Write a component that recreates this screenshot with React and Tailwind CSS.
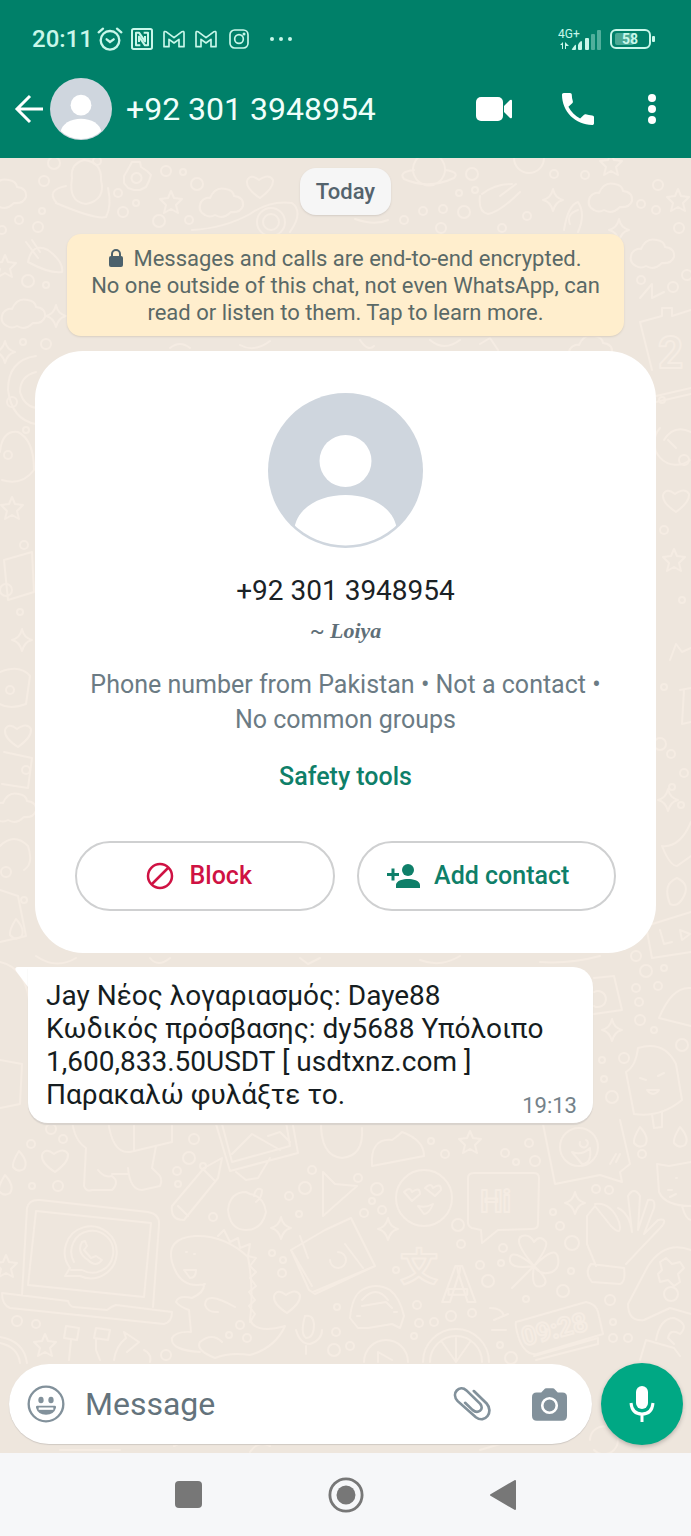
const STAR = 'M0-11 3-4 11-3 5 3 7 11 0 7-7 11-5 3-11-3-3-4Z'
const SPARKLE = 'M0-11Q2-2 10 0Q2 2 0 11Q-2 2-10 0Q-2-2 0-11Z'
const HEART = 'M0 12Q-14 3-13-5Q-10-13-1-6Q9-13 13-6Q14 2 0 12Z'
const CLOUD = 'M-16 12Q-24 8-20-1Q-16-6-11-5Q-6-17 5-14Q12-13 13-7Q23-6 22 3Q19 10 10 9Q2 17-6 12Q-11 15-16 12Z'
const DROP = 'M0-9Q10 2 5 9Q-1 13-6 7Q-7 2 0-9Z'

const SHAPES = [
  [STAR, 171, 202], [STAR, 5, 266], [STAR, 678, 200], [STAR, 611, 164], [STAR, 45, 1345], [STAR, 6, 1266],
  [STAR, 470, 1142], [STAR, 12, 508], [STAR, 674, 560],
  [SPARKLE, 553, 200], [SPARKLE, 619, 230], [SPARKLE, 56, 316], [SPARKLE, 281, 1228], [SPARKLE, 388, 1229],
  [SPARKLE, 575, 1203], [SPARKLE, 612, 1030], [SPARKLE, 5, 352], [SPARKLE, 22, 640], [SPARKLE, 668, 800],
  [HEART, 260, 186], [HEART, 55, 1160], [HEART, 287, 1301], [HEART, 18, 735], [HEART, 676, 500],
  [CLOUD, 221, 203], [CLOUD, 610, 198], [CLOUD, 652, 254], [CLOUD, 23, 314], [CLOUD, 4, 194], [CLOUD, 590, 350],
  [CLOUD, 14, 808], [DROP, 19, 1160], [DROP, 5, 1184], [DROP, 640, 1136], [DROP, 680, 1136], [DROP, 16, 928],
]

const DOTS = [
  [54, 163, 6], [97, 161, 4], [44, 181, 5], [166, 171, 5], [118, 193, 4], [136, 203, 3], [19, 220, 4], [42, 211, 3],
  [38, 227, 5], [2, 230, 4], [123, 212, 5], [159, 221, 6], [189, 220, 4], [183, 172, 3], [197, 184, 6], [28, 281, 6],
  [46, 285, 3], [23, 342, 3], [46, 344, 5], [472, 174, 6], [459, 193, 3], [475, 190, 3], [554, 174, 4], [585, 175, 4],
  [423, 211, 4], [443, 209, 4], [464, 212, 6], [404, 220, 4], [441, 228, 5], [502, 228, 4], [527, 216, 4],
  [641, 204, 4], [656, 210, 4], [658, 185, 5], [679, 228, 5], [687, 275, 5], [673, 287, 5], [641, 280, 4],
  [12, 402, 5], [26, 430, 3], [8, 455, 4], [24, 545, 4], [6, 590, 6], [20, 612, 3], [10, 690, 4], [26, 770, 4],
  [6, 872, 5], [24, 900, 3], [662, 400, 3], [684, 460, 5], [664, 530, 4], [682, 600, 3], [664, 687, 3], [660, 744, 6],
  [671, 754, 4], [684, 773, 4], [672, 787, 3], [681, 805, 3], [636, 956, 5], [646, 971, 6], [664, 968, 3],
  [636, 988, 4], [658, 986, 4], [639, 1002, 4], [640, 1020, 5], [654, 1030, 3], [682, 1045, 6], [602, 1060, 3],
  [624, 1058, 5], [604, 1079, 3], [612, 1097, 6], [31, 1144, 4], [63, 1139, 4], [51, 1129, 5], [32, 1186, 3],
  [58, 1186, 5], [194, 1139, 5], [189, 1158, 6], [177, 1171, 4], [203, 1166, 3], [178, 1184, 3], [213, 1217, 4],
  [312, 1170, 4], [305, 1188, 6], [289, 1196, 4], [299, 1214, 3], [272, 1253, 3], [283, 1260, 3], [282, 1273, 4],
  [17, 1321, 5], [36, 1324, 4], [240, 1325, 4], [229, 1335, 3], [247, 1338, 4], [166, 1355, 5], [336, 1332, 4],
  [334, 1350, 6], [337, 1307, 3], [431, 1141, 3], [445, 1154, 4], [505, 1153, 4], [516, 1162, 3], [529, 1143, 4],
  [535, 1161, 5], [358, 1178, 4], [377, 1189, 6], [372, 1201, 3], [382, 1210, 4], [364, 1213, 4], [458, 1225, 6],
  [461, 1244, 4], [396, 1270, 3], [503, 1248, 4], [480, 1265, 4], [501, 1263, 3], [488, 1281, 6], [553, 1212, 3],
  [560, 1226, 4], [572, 1243, 7], [571, 1271, 3], [563, 1291, 6], [526, 1299, 3], [417, 1305, 4], [419, 1323, 4],
  [434, 1322, 4], [451, 1316, 5], [472, 1313, 4], [414, 1336, 3], [610, 1300, 5], [596, 1189, 4], [609, 1190, 4],
  [642, 1154, 4], [613, 1338, 4], [628, 1338, 4], [613, 1322, 3], [350, 1346, 4], [511, 1358, 6], [500, 1345, 3],
]

const DOODLES = [
  // flower and gear
  'M72 178Q70 164 84 160Q102 162 101 180Q106 200 86 204Q68 202 72 178ZM56 202Q46 190 66 186M108 188Q112 206 106 217Q96 220 56 203',
  'M132 162l8 0 1 5 6 4 4 4-2 6-3 6-6 3-6 0-6-2-4-5 0-7 3-5zM136 173a5 5 0 1 0 1 10a5 5 0 1 0-1-10',
  // saucer
  'M192 230Q225 228 250 214Q270 200 292 203Q304 212 290 232M257 222a13 13 0 1 0 28 0a13 13 0 1 0-28 0M263 222a7 7 0 1 0 16 0a7 7 0 1 0-16 0M355 219Q375 226 388 220',
  // saturn
  'M414 175a16 16 0 1 1 30 0a16 16 0 0 1-30 0M414 170Q398 172 404 179Q428 190 454 178Q460 172 445 170M514 158a14 14 0 0 0 30 0',
  // comet and rocket
  'M480 196Q478 212 488 214Q500 212 520 192M482 194Q495 184 512 184M500 196l16-12M564 230Q568 205 578 202Q586 214 578 232M570 224Q566 214 578 210',
  'M28 262Q32 242 48 250Q64 262 62 272Q50 274 28 262M26 242l12 16M32 240l8 12M640 298l12-14 0 14 12-6',
  // moon, mitten, lantern down the left side
  'M36 356Q8 360 8 390Q12 420 36 424M36 372Q20 376 20 392Q24 406 36 408M0 452Q2 430 18 432Q34 440 34 470Q22 486 2 480M4 560l28-8 2 40-26 8z',
  'M0 672q20-8 30 4l-4 28q-16 6-26 0M4 752l28 6-4 30-26-4M0 846q14-14 28 0q6 18-4 24M0 890l18 6 8 40-26 6M0 962Q28 968 30 1010M0 1060l22 4-2 40-20 4',
  // calendar on the right
  'M640 322l22-6 0 -8 10 0 0 8 19-6M640 322l12 48M656 396l35-8M656 402l35-8M664 440q10-16 27-8M660 428a22 22 0 0 0 30 32M668 440l8 8M670 660l6-16 6 8 9-4M680 690l11-2M684 690l-2 34 9-2',
  'M662 846Q680 848 691 822M662 846Q670 866 677 866L691 856M677 878Q690 884 684 896Q678 908 670 904Q662 884 677 878ZM646 926l45-14M652 958l39-6M646 926l6 32M660 930l4 14 8-2M680 930l10 4-8 6z',
  // camera and ice cream by the bubble
  'M594 978l20-2 8 34-28 4M594 992a8 8 0 1 1 0 14M659 1018Q672 986 691 988M659 1018l32 8M626 1072Q636 1066 638 1048Q664 1040 676 1064L682 1100Q660 1118 634 1114ZM640 1078l6 2M658 1076l6-3M647 1090q6 8 12 0zM652 1114l2 14 8-1 0-14',
  // llama
  'M72 1120Q74 1140 86 1148L84 1186Q86 1192 92 1190L112 1190Q120 1182 112 1176Q104 1178 98 1170M112 1174l16 0M128 1168Q130 1190 142 1190L160 1186Q164 1178 156 1172L152 1168L156 1146M108 1120Q112 1154 130 1152L172 1142V1120M134 1124v27',
  // photo
  'M216 1124l14 47 68-18-6-33M222 1124l10 38 58-16-4-24M232 1154l20-20 28 16M268 1136l12-4 10 10M236 1172l10 8 12-2 12-20',
  'M321 1120Q320 1156 342 1158Q364 1156 362 1128M372 1166Q370 1138 392 1140Q398 1136 402 1132Q424 1140 424 1156Z',
  // pencil and apple
  'M172 1206l32-38 18-10-4 20-34 42q-14 0-12-14zM178 1206l10 10M204 1170l10 10M246 1192Q230 1192 228 1210Q230 1230 246 1230Q262 1230 266 1212Q264 1196 250 1194ZM254 1196q2-10 8-6q0 8-6 12',
  // laptop
  'M22 1295L27 1208Q29 1199 40 1200L148 1212Q160 1214 159 1225L153 1307M28 1285L36 1211 151 1223 144 1297ZM2 1293L68 1301Q70 1307 74 1307L107 1310Q112 1306 116 1305L172 1312Q172 1322 164 1324L10 1308Q2 1305 2 1293Z',
  'M70 1268a26 26 0 1 1 10 8l-15 0zM74 1262a21 21 0 1 1 8 8l-11 0M82 1242q-6 10 6 18q8 8 14 0l-6-4-5 2-7-8 3-4-2-5z',
  // dinosaur
  'M205 1284Q180 1290 172 1262Q166 1238 195 1236Q225 1235 248 1257Q254 1290 250 1320Q256 1334 285 1326Q275 1348 250 1355Q230 1352 215 1358Q195 1350 200 1342Q212 1332 222 1342M200 1352Q170 1350 172 1338Q176 1331 191 1332L189 1310Q180 1307 176 1302Q178 1295 192 1298Q205 1292 204 1284M235 1307Q205 1290 205 1305Q208 1313 218 1312M184 1270h12q0 8-6 8zM186 1252h1M194 1254h1',
  'M218 1236l6-6 6 12 8-4 2 10 10-4-2 12 8 2-6 8 6 6-6 6 6 8-7 6 6 8-6 6 6 8-5 8',
  // envelope, arrow
  'M323 1172l0 44 34-30-22-2zM291 1250l34-20 26-12 24 48-60 28-6-4zM291 1250l21 36M300 1236l8 22M330 1260a8 8 0 1 0 8-8M345 1244l18 24M375 1266l-62 26',
  // emoji with hearts
  'M396 1198a28 28 0 1 1 56 0a28 28 0 1 1-56 0M404 1192q6-6 8 0q8-6 8 2l-8 7zM425 1188q6-6 8 0q8-6 8 2l-6 6zM418 1206q8 2 15-2q-4 10-9 10z',
  'M468 1178Q468 1173 474 1173L534 1173Q539 1173 539 1178L538 1224Q538 1229 532 1229L498 1230 482 1243 481 1230 472 1228Q467 1226 468 1220Z',
  'M543 1124l12 60 45-9 22 7-2-10 10-8-10-44M560 1147a19 19 0 1 1 38 0a19 19 0 1 1-38 0M572 1152q10 4 18-4q2 16-8 16zM580 1142a4 4 0 1 0 6-2M610 1164l6-10M616 1162l4-8',
  // cat
  'M657 1164l12 2 22-4M657 1164l2 28q6 14 32 14M676 1178h1M672 1190l-4 0M676 1194l-6 3M682 1206q4 14 9 14',
  // hand
  'M596 1266l-9-22 0-28 8-10 16 20q12 12 8-4q-8-20-24-18M618 1208q12 6 14 24l-4-36q6-10 12 0l-2 34 10-30q8-2 6 8l-10 26 14-14q10-2 4 6l-36 38M591 1264l33 4q2 14-4 16l-28-2q-8-10-1-18z',
  // clover
  'M534 1266Q512 1240 522 1236Q530 1234 534 1242Q540 1234 546 1242Q548 1248 534 1266Q556 1244 558 1258Q560 1268 552 1272Q540 1276 534 1266Q552 1282 542 1286Q530 1290 534 1266Q512 1248 510 1258Q508 1270 534 1266L512 1288',
  // controller
  'M691 1250Q665 1240 648 1266L628 1304Q628 1322 644 1320L670 1308 691 1314M660 1262l6-4 6 6 8-2 4 6-6 6 2 8-6 4-6-6-8 2-2-8 4-4zM664 1294a7 7 0 1 0 14 0a7 7 0 1 0-14 0',
  // car
  'M358 1328l-8-10q2-22 12-28q14-8 28 0q10 8 14 26l-4 12-8-4-24 4zM362 1306l24-4 6 6M362 1300q14-16 26 0M357 1316h3M394 1312h3',
  // alarm clock, citrus, play
  'M516 1322l70-20q10 2 12 10l5 22-66 20q-14 2-20-22q-2-8-1-10M534 1356l64-18v6l-62 16',
  'M423 1362a32 32 0 0 1 66 0M430 1362a26 26 0 0 1 52 0M456 1362l-14-20M456 1362l14-20M456 1362v-24M364 1362a22 22 0 0 1 44 0M378 1362v-10l14 8',
  'M0 1337q24 4 27 26M0 1343q18 4 20 20M66 1326l13 2-2 12-13-2zM96 1328l14 2-2 10-14-2zM71 1340l-2 20M96 1340l0 10 4 10M114 1360q2-14 12-22l-2-6 15 10-12 10M144 1350q8 4 6 12',
  // microphone
  'M305 1316q8-2 9 8q0 14-8 14q-6-4-1-22zM296 1330q4 14 14 14q12-4 12-14M306 1346l0 8M656 1340q4-22 18-22q16 6 6 16q-10-6-12 4l6 6M640 1360l6-20 28 8 6 8M490 1308q12 0 14 8M494 1320l14-6M492 1330h14',
  'M60 1450h60M174 1446l16-8M250 1452q8-12 20-6M480 1450l20-6M590 1440a14 14 0 1 1 4 10M660 1440q16-8 24-30',
  'M240 345q14 8 30-4M170 348q10-8 20 0M360 340q8 12 14 6M430 340q14 12 30 0M480 344l10-6 8 12M36 956q20 14 40 2M150 958q8 10 20 0M300 958l8 6 12-6M420 960q20 8 40-4M540 962q30 2 60-6',
]

function Wallpaper() {
  return (
    <svg
      aria-hidden="true"
      viewBox="0 158 691 1295"
      preserveAspectRatio="xMidYMin slice"
      className="absolute inset-0 h-full w-full"
      fill="none"
      stroke="#f5ece3"
      strokeWidth="2"
      strokeLinecap="round"
      strokeLinejoin="round"
    >
      {DOTS.map(([x, y, r], i) => <circle key={i} cx={x} cy={y} r={r} />)}
      {SHAPES.map(([d, x, y], i) => <path key={i} d={d} transform={`translate(${x} ${y})`} />)}
      {DOODLES.map((d, i) => <path key={i} d={d} />)}
      <g fontFamily="Roboto, sans-serif" fontWeight="700">
        <text x="480" y="1212" fontSize="32">Hi</text>
        <text x="400" y="1280" fontSize="38" fontFamily="'Noto Sans CJK JP', sans-serif">文</text>
        <text x="442" y="1302" fontSize="50">A</text>
        <text x="524" y="1346" fontSize="26" transform="rotate(-14 524 1346)">09:28</text>
        <text x="658" y="368" fontSize="44">2</text>
      </g>
    </svg>
  )
}

function Avatar({ className }) {
  return (
    <svg viewBox="0 0 155 155" className={className} role="img" aria-label="Profile photo">
      <clipPath id="face"><circle cx="77.5" cy="77.5" r="75" /></clipPath>
      <circle cx="77.5" cy="77.5" r="77.5" fill="#cfd6de" />
      <g fill="#fff" clipPath="url(#face)">
        <circle cx="77.5" cy="68" r="26" />
        <path d="M26 138C30 90 125 90 129 138L129 155H26Z" />
      </g>
    </svg>
  )
}

function StatusBar() {
  return (
    <div className="flex h-10 items-center pr-9 pl-8 text-[#c9f7ea]">
      <span className="text-2xl font-medium">20:11</span>
      <svg viewBox="0 0 76 72" className="ml-1 h-6 w-[26px]" fill="none" stroke="currentColor" strokeWidth="7" strokeLinecap="round">
        <circle cx="38" cy="40" r="28" />
        <path d="M28 37l10 8 11-8M4 16L17 5M72 16L59 5" />
      </svg>
      <svg viewBox="0 0 66 66" className="ml-2 size-[22px]" fill="none" stroke="currentColor" strokeWidth="6" strokeLinejoin="round">
        <rect x="3" y="3" width="60" height="60" rx="5" />
        <path d="M28 52H15V14h9l18 26V24M38 14h13v38h-9L24 26v16" />
      </svg>
      {[0, 1].map(n => (
        <svg key={n} viewBox="0 0 66 52" className="ml-[10px] h-[18px] w-[22px]" fill="none" stroke="currentColor" strokeWidth="5" strokeLinejoin="round">
          <path d="M3 49V7q0-5 6-3l24 18L57 4q6-2 6 3v42H48V27L33 38 18 27v22Z" />
        </svg>
      ))}
      <svg viewBox="0 0 60 60" className="ml-3 size-5" fill="none" stroke="currentColor" strokeWidth="5">
        <rect x="3" y="3" width="54" height="54" rx="14" />
        <circle cx="30" cy="30" r="13" />
        <circle cx="45" cy="15" r="2" />
      </svg>
      <svg viewBox="0 0 24 6" className="ml-5 h-[6px] w-6" fill="currentColor">
        <circle cx="3" cy="3" r="2" /><circle cx="12" cy="3" r="2" /><circle cx="21" cy="3" r="2" />
      </svg>

      <div className="ml-auto flex items-center gap-2">
        <svg viewBox="0 0 44 24" className="h-6 w-11" fill="currentColor">
          <text x="0" y="11" fontSize="12" fontFamily="Roboto, sans-serif">4G+</text>
          <path d="M2 18l3-3v7h-1v-4zM7 15l4 4H8v3H7z" />
          <path d="M14 22l3-4q1-1 1 1v3q0 1-1 1h-2q-2 0-1-1z" />
          <path d="M21 16l2-2q1 0 1 1v7q0 1-1 1h-2q-1 0-1-1v-4z" />
          <rect x="27" y="11" width="4" height="12" rx="1" />
          <g opacity="0.4">
            <rect x="33" y="7" width="4" height="16" rx="1" />
            <rect x="39" y="3" width="4" height="20" rx="1" />
          </g>
        </svg>
        <svg viewBox="0 0 45 20" className="h-5 w-[45px]" fill="none">
          <rect x="5" y="4" width="19" height="12" rx="2" fill="#4ba994" />
          <rect x="1" y="1" width="39" height="18" rx="5" stroke="currentColor" strokeWidth="2" />
          <rect x="42" y="7" width="3" height="6" rx="1" fill="currentColor" />
          <text x="20" y="15" fontSize="14" fontWeight="700" textAnchor="middle" fontFamily="Roboto, sans-serif" fill="currentColor">58</text>
        </svg>
      </div>
    </div>
  )
}

function Header() {
  return (
    <header className="bg-[#008069] pt-[19px] pb-[9px]">
      <StatusBar />
      <div className="mt-[10px] flex h-20 items-center pr-[31px] pl-[14px] text-white">
        <button aria-label="Back">
          <svg viewBox="0 0 30 30" className="size-[30px]" fill="none" stroke="currentColor" strokeWidth="3">
            <path d="M29 15H3M16 2L3 15l13 13" />
          </svg>
        </button>
        <Avatar className="ml-[6px] size-[62px]" />
        <h1 className="ml-[14px] text-[32px] leading-10 text-[#f0fffb]">+92 301 3948954</h1>
        <button className="ml-auto" aria-label="Video call">
          <svg viewBox="0 0 36 24" className="h-6 w-9" fill="currentColor">
            <rect y="0" width="27" height="24" rx="5" />
            <path d="M28 9L34 3q2-1 2 1v16q0 2-2 1l-6-6Z" />
          </svg>
        </button>
        <button className="ml-[50px]" aria-label="Voice call">
          <svg viewBox="3 3 18 18" className="size-8" fill="currentColor">
            <path d="M6.6 10.8c1.4 2.8 3.8 5.1 6.6 6.6l2.2-2.2c.3-.3.7-.4 1-.2 1.100.4 2.300.6 3.600.6.6 0 1 .4 1 1V20c0 .6-.4 1-1 1-9.400 0-17-7.600-17-17 0-.6.4-1 1-1h3.500c.6 0 1 .4 1 1 0 1.200.2 2.400.6 3.600.1.3 0 .7-.2 1z" />
          </svg>
        </button>
        <button className="ml-[50px]" aria-label="More options">
          <svg viewBox="0 0 16 30" className="h-[30px] w-4" fill="currentColor">
            <circle cx="8" cy="4" r="4" /><circle cx="8" cy="15" r="4" /><circle cx="8" cy="26" r="4" />
          </svg>
        </button>
      </div>
    </header>
  )
}

function ContactCard() {
  return (
    <section className="mx-auto mt-[15px] flex w-full max-w-[621px] flex-col items-center rounded-[48px] bg-white px-10 pt-[42px] pb-[42px] text-center">
      <Avatar className="size-[155px]" />
      <h2 className="mt-[25px] text-[28px] leading-9 text-[#1b2226]">+92 301 3948954</h2>
      <p className="mt-[2px] text-[22px] leading-10 text-[#5f6f78]">
        ~ <span className="font-['Liberation_Serif',serif] font-bold italic">Loiya</span>
      </p>
      <p className="mt-4 text-[25px] leading-[35px] text-[#6b7b84]">
        Phone number from Pakistan • Not a contact •<br />No common groups
      </p>
      <a href="#safety" className="mt-6 text-[25px] leading-8 font-medium text-[#0f7f69]">Safety tools</a>
      <div className="mt-12 grid w-full grid-cols-2 gap-[22px]">
        <button className="flex h-[70px] items-center justify-center gap-4 rounded-full border-2 border-[#cfd0d1] pr-3 text-[25px] font-medium text-[#cf1243]">
          <svg viewBox="0 0 28 28" className="size-7" fill="none" stroke="currentColor" strokeWidth="2.5">
            <circle cx="14" cy="14" r="12" /><path d="M6 22L22 6" />
          </svg>
          Block
        </button>
        <button className="flex h-[70px] items-center justify-center gap-[14px] rounded-full border-2 border-[#cfd0d1] pr-4 text-[25px] font-medium text-[#0f7f69]">
          <svg viewBox="1 2 22 20" className="h-[30px] w-[33px]" fill="currentColor">
            <circle cx="15" cy="8" r="4" />
            <path d="M6 10V7H4v3H1v2h3v3h2v-3h3v-2zM15 14c-3 0-8 1-8 4v2h16v-2c0-3-5-4-8-4z" />
          </svg>
          Add contact
        </button>
      </div>
    </section>
  )
}

function Message() {
  return (
    <div className="mt-[14px] flex items-start pl-[14px]">
      <svg viewBox="0 0 14 20" className="h-5 w-[14px] shrink-0" fill="#fff">
        <path d="M14 0H4Q0 0 2 4L14 20Z" />
      </svg>
      <article className="relative w-[565px] rounded-[20px] rounded-tl-none bg-white pt-3 pr-4 pb-3 pl-[18px] shadow-[0_2px_1px_#d8d2cc]">
        <p className="text-[28px] leading-[33px] text-[#161d21]">
          Jay Νέος λογαριασμός: Daye88<br />
          Κωδικός πρόσβασης: dy5688 Υπόλοιπο<br />
          1,600,833.50USDT [ usdtxnz.com ]<br />
          Παρακαλώ φυλάξτε το.
        </p>
        <time className="absolute right-4 bottom-[5px] text-[22px] leading-6 text-[#74828a]">19:13</time>
      </article>
    </div>
  )
}

function Composer() {
  return (
    <form className="relative flex items-center gap-[9px] pr-2 pb-2 pl-[9px]" onSubmit={e => e.preventDefault()}>
      <div className="flex h-20 min-w-0 flex-1 items-center rounded-full bg-white pr-[25px] pl-[18px] shadow-[0_1px_1px_#cfc9c3]">
        <button type="button" aria-label="Emoji" className="text-[#82919b]">
          <svg viewBox="0 0 114 114" className="size-[38px]" fill="none" stroke="currentColor" strokeWidth="7">
            <circle cx="57" cy="57" r="52" />
            <g fill="currentColor" stroke="none">
              <ellipse cx="42" cy="45" rx="8" ry="10" /><ellipse cx="72" cy="45" rx="8" ry="10" />
              <path d="M30 62h54q4 0 3 6-6 21-30 21T27 68q-1-6 3-6Z" />
            </g>
            <path d="M35 71h44" stroke="#fff" />
          </svg>
        </button>
        <input
          type="text"
          aria-label="Message"
          placeholder="Message"
          className="ml-5 min-w-0 flex-1 text-[32px] outline-none placeholder:text-[#64737c]"
        />
        <button type="button" aria-label="Attach" className="text-[#82919b]">
          <svg viewBox="0 0 116 104" className="h-[35px] w-[39px]" fill="none" stroke="currentColor" strokeWidth="8" strokeLinecap="round">
            <path d="M62 12L100 49C122 74 96 110 68 90L14 42C-8 18 20-8 40 10L81 50C94 67 74 82 58 68L36 47" />
          </svg>
        </button>
        <button type="button" aria-label="Camera" className="ml-10 text-[#82919b]">
          <svg viewBox="0 0 106 98" className="h-[33px] w-[35px]">
            <path fill="currentColor" d="M36 4q3-4 8-4h18q5 0 8 4l8 9h14q14 0 14 14v56q0 15-15 15H15Q0 98 0 83V27q0-14 14-14h14Z" />
            <circle cx="53" cy="52" r="22" fill="none" stroke="#fff" strokeWidth="8" />
          </svg>
        </button>
      </div>
      <button type="button" aria-label="Record voice message" className="flex size-[82px] shrink-0 items-center justify-center rounded-full bg-[#00a884] text-white shadow-[0_2px_4px_#b9b2ab]">
        <svg viewBox="0 0 26 36" className="h-9 w-[26px]" fill="none" stroke="currentColor" strokeWidth="3">
          <rect x="7" y="0" width="12" height="23" rx="6" fill="currentColor" stroke="none" />
          <path d="M2 17q1 11 11 11t11-11M13 28v8" />
        </svg>
      </button>
    </form>
  )
}

function SystemNav() {
  return (
    <nav className="flex h-[83px] items-center justify-center gap-[126px] bg-[#f6f7f9] text-[#777]">
      <button aria-label="Recent apps" className="size-[27px] rounded-[4px] bg-current" />
      <button aria-label="Home">
        <svg viewBox="0 0 38 38" className="size-9">
          <circle cx="19" cy="19" r="17" fill="none" stroke="currentColor" strokeWidth="3" />
          <circle cx="19" cy="19" r="10" fill="currentColor" />
        </svg>
      </button>
      <button aria-label="Go back">
        <svg viewBox="0 0 26 30" className="h-[30px] w-[26px]" fill="currentColor" stroke="currentColor" strokeWidth="2" strokeLinejoin="round">
          <path d="M1 15L25 1v28Z" />
        </svg>
      </button>
    </nav>
  )
}

export default function App() {
  return (
    <div className="flex min-h-screen flex-col font-[Roboto,'Noto_Sans',sans-serif]">
      <Header />
      <div className="relative flex flex-1 flex-col bg-[#eee6dd]">
        <Wallpaper />
        <main className="relative flex-1 pt-[10px]">
          <div className="mx-auto flex h-[47px] w-fit items-center rounded-2xl bg-[#f6f6f6] px-4 text-[22px] font-medium text-[#54636d] shadow-[0_1px_2px_#d3ccc5]">
            Today
          </div>
          <p className="mx-auto mt-[19px] w-full max-w-[557px] rounded-[14px] bg-[#ffeecd] pt-[11px] pb-[10px] text-center text-[22px] leading-[27px] text-[#5a6967] shadow-[0_1px_2px_#d8cfc2]">
            <svg viewBox="0 0 14 18" className="mr-[10px] mb-1 inline h-[18px] w-[14px]" fill="#4c616c">
              <rect y="7" width="14" height="11" rx="2" />
              <path d="M3 8V5a4 4 0 0 1 8 0v3" fill="none" stroke="#4c616c" strokeWidth="2" />
            </svg>
            Messages and calls are end-to-end encrypted.<br />
            No one outside of this chat, not even WhatsApp, can<br />
            read or listen to them. Tap to learn more.
          </p>
          <ContactCard />
          <Message />
        </main>
        <Composer />
      </div>
      <SystemNav />
    </div>
  )
}
